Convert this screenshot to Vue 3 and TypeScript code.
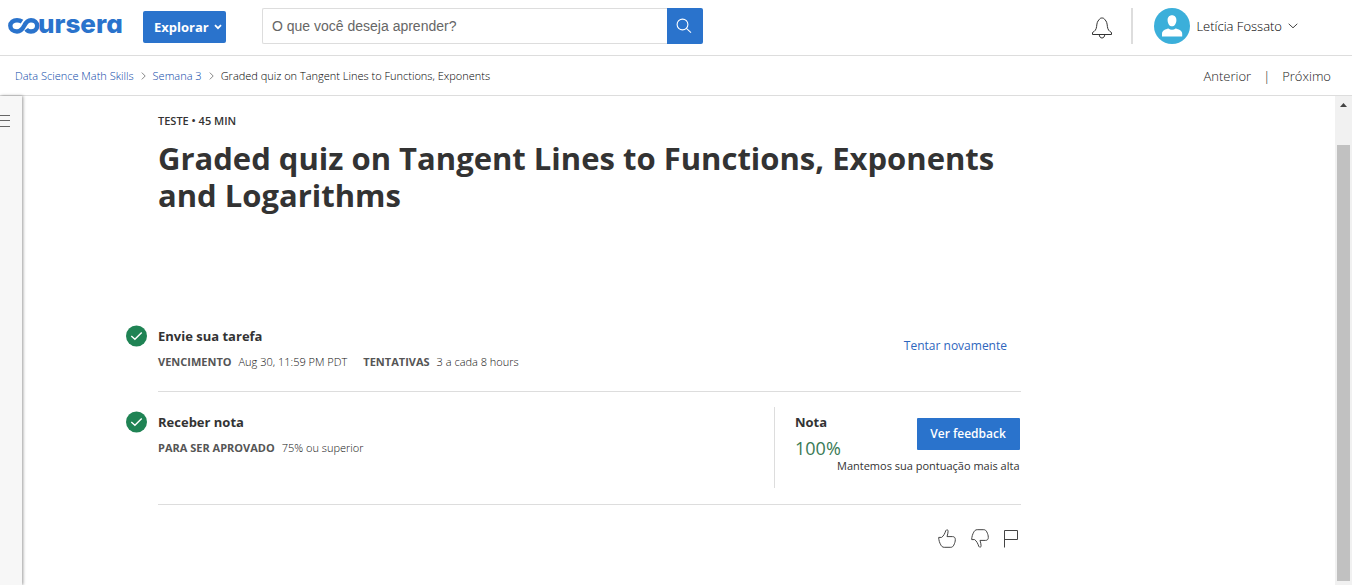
<script setup lang="ts">
import { ref } from 'vue'

interface Detail {
  label: string
  value: string
}

const query = ref('')
const courseTitle = 'Graded quiz on Tangent Lines to Functions, Exponents and Logarithms'
const submitDetails: Detail[] = [
  { label: 'VENCIMENTO', value: 'Aug 30, 11:59 PM PDT' },
  { label: 'TENTATIVAS', value: '3 a cada 8 hours' },
]
const gradeDetails: Detail[] = [{ label: 'PARA SER APROVADO', value: '75% ou superior' }]
</script>

<template>
  <div class="page">
    <header class="topbar">
      <a class="logo" href="#" aria-label="coursera">
        <svg width="116" height="36" viewBox="0 0 116 36">
          <path
            d="M14 13.6C12.6 12.6 10.8 12.2 9 12.2C5.2 12.2 2.3 14.6 2.3 17.8C2.3 21.1 5.2 23.5 9 23.5C12.8 23.5 14.6 21 16.2 17.8C17.8 14.4 19.4 12.2 23 12.2C26.6 12.2 29.2 14.6 29.2 17.8C29.2 21.1 26.6 23.5 23 23.5C20.8 23.5 19.2 22.6 18.2 21.2"
            fill="none"
            stroke="#2a73cc"
            stroke-width="4.4"
          />
          <text class="logo-text" x="30" y="25">ursera</text>
        </svg>
      </a>
      <button class="explore" type="button">
        Explorar
        <svg width="8" height="6" viewBox="0 0 8 6">
          <path d="M1 1.2L4 4.2L7 1.2" fill="none" stroke="#fff" stroke-width="1.8" />
        </svg>
      </button>
      <form class="search" role="search" @submit.prevent>
        <input v-model="query" type="text" aria-label="Pesquisar" placeholder="O que você deseja aprender?" />
        <button type="submit" aria-label="Enviar pesquisa">
          <svg width="18" height="16" viewBox="0 0 18 16" fill="none" stroke="#fff" stroke-width="1.1">
            <circle cx="6.5" cy="6.5" r="5.4" />
            <path d="M10.4 10.4L15 14.6" />
          </svg>
        </button>
      </form>
      <div class="account">
        <button class="bell" type="button" aria-label="Notificações">
          <svg width="22" height="22" viewBox="0 0 22 22" fill="none" stroke="#333" stroke-width="1">
            <path d="M1.5 17.5V15.5C4 14.2 5.2 12.6 5.6 9.5C6 5.8 6.4 4.4 8 2.8C9 1.2 9.8 1 11 1C12.2 1 13 1.2 14 2.8C15.6 4.4 16 5.8 16.4 9.5C16.8 12.6 18 14.2 20.5 15.5V17.5Z" />
            <path d="M8.3 17.5C8.3 19.6 9.4 21 11 21C12.6 21 13.7 19.6 13.7 17.5" />
          </svg>
        </button>
        <span class="separator"></span>
        <button class="user" type="button">
          <svg width="36" height="36" viewBox="0 0 36 36">
            <circle cx="18" cy="18" r="18" fill="#3bafda" />
            <path d="M18 7.2C20.8 7.2 22.6 9.3 22.4 12.4C22.2 15.8 20.4 18.3 18 18.3C15.6 18.3 13.8 15.8 13.6 12.4C13.4 9.3 15.2 7.2 18 7.2Z" fill="#fff" />
            <path d="M8 28.5V25.8C8 22.4 11.4 21.2 14.4 20.5C16.4 22.1 19.6 22.1 21.6 20.5C24.6 21.2 28.2 22.4 28.2 25.8V28.5Z" fill="#fff" />
          </svg>
          <span>Letícia Fossato</span>
          <svg width="10" height="6" viewBox="0 0 10 6">
            <path d="M.7 .8L5 4.8L9.3 .8" fill="none" stroke="#444" stroke-width="1" />
          </svg>
        </button>
      </div>
    </header>

    <div class="subbar">
      <nav class="crumbs" aria-label="Trilha">
        <a href="#">Data Science Math Skills</a>
        <svg width="5" height="8" viewBox="0 0 5 8"><path d="M.8 .6L4.2 4L.8 7.4" fill="none" stroke="#888" /></svg>
        <a href="#">Semana 3</a>
        <svg width="5" height="8" viewBox="0 0 5 8"><path d="M.8 .6L4.2 4L.8 7.4" fill="none" stroke="#888" /></svg>
        <span class="current">{{ courseTitle }}</span>
      </nav>
      <nav class="pager" aria-label="Itens">
        <a href="#">Anterior</a>
        <span>|</span>
        <a href="#">Próximo</a>
      </nav>
    </div>

    <div class="body">
      <aside class="rail">
        <button type="button" aria-label="Menu">
          <svg width="10" height="14" viewBox="0 0 10 14"><path d="M0 1.5H10M0 6.5H10M0 12.5H10" stroke="#666" /></svg>
        </button>
      </aside>

      <main class="content">
        <p class="kind">TESTE • 45 MIN</p>
        <h1>{{ courseTitle }}</h1>

        <section class="step submit">
          <svg class="check" width="22" height="22" viewBox="0 0 22 22">
            <circle cx="10.5" cy="11" r="10.5" fill="#1f8354" />
            <path d="M5.3 11L8.9 14.3L15.7 7.4" fill="none" stroke="#fff" stroke-width="1.4" />
          </svg>
          <div class="step-body">
            <div class="info">
              <h2>Envie sua tarefa</h2>
              <dl>
                <div v-for="item in submitDetails" :key="item.label">
                  <dt>{{ item.label }}</dt>
                  <dd>{{ item.value }}</dd>
                </div>
              </dl>
            </div>
            <a class="retry" href="#">Tentar novamente</a>
          </div>
        </section>

        <section class="step">
          <svg class="check" width="22" height="22" viewBox="0 0 22 22">
            <circle cx="10.5" cy="11" r="10.5" fill="#1f8354" />
            <path d="M5.3 11L8.9 14.3L15.7 7.4" fill="none" stroke="#fff" stroke-width="1.4" />
          </svg>
          <div class="step-body">
            <div class="info">
              <h2>Receber nota</h2>
              <dl>
                <div v-for="item in gradeDetails" :key="item.label">
                  <dt>{{ item.label }}</dt>
                  <dd>{{ item.value }}</dd>
                </div>
              </dl>
            </div>
            <div class="grade">
              <div class="score">
                <h2>Nota</h2>
                <p>100%</p>
              </div>
              <div class="feedback">
                <button type="button">Ver feedback</button>
                <p>Mantemos sua pontuação mais alta</p>
              </div>
            </div>
          </div>
        </section>

        <div class="reactions">
          <button type="button" aria-label="Gostei">
            <svg width="18" height="19" viewBox="0 0 18 19" fill="none" stroke="#444">
              <path d="M.7 8.4H3.6C5.6 7 6.8 4.6 7.8 1.6C8.4 .4 10.3 .6 10.1 2.2C10 4 9.6 5.6 9 7.6H14.5C16.5 7.6 17.3 8.8 17.3 10.6C17.3 12.6 16.7 14.2 15.8 16.1C15 17.6 14.2 18.3 12.8 18.3H6.2C4.4 18.3 3.6 17.3 2.8 15.9C1.6 13.8 .7 11.2 .7 8.4Z" />
            </svg>
          </button>
          <button type="button" aria-label="Não gostei">
            <svg width="18" height="19" viewBox="0 0 18 19" fill="none" stroke="#444">
              <path d="M.7 10.6H3.6C5.6 12 6.8 14.4 7.8 17.4C8.4 18.6 10.3 18.4 10.1 16.8C10 15 9.6 13.4 9 11.4H14.5C16.5 11.4 17.3 10.2 17.3 8.4C17.3 6.4 16.7 4.8 15.8 2.9C15 1.4 14.2 .7 12.8 .7H6.2C4.4 .7 3.6 1.7 2.8 3.1C1.6 5.2 .7 7.8 .7 10.6Z" />
            </svg>
          </button>
          <button type="button" aria-label="Sinalizar">
            <svg width="14" height="19" viewBox="0 0 14 19" fill="none" stroke="#444">
              <path d="M.5 18.5V1.5H13.5V10.5H.5" />
            </svg>
          </button>
        </div>
      </main>

      <div class="scroll-track" aria-hidden="true">
        <svg width="7" height="4" viewBox="0 0 7 4"><path d="M0 4L3.5 0L7 4Z" fill="#444" /></svg>
        <div class="scroll-thumb"></div>
      </div>
    </div>
  </div>
</template>

<style>
body {
  margin: 0;
  background: #fff;
}
</style>

<style scoped>
* {
  box-sizing: border-box;
}

.page {
  display: flex;
  flex-direction: column;
  min-height: 100vh;
  color: #333;
  font: 11px/16px 'Open Sans', 'Noto Sans', sans-serif;
}

svg {
  display: block;
  flex: none;
  overflow: visible;
}

a {
  color: #2e66bd;
  text-decoration: none;
}

button {
  border: 0;
  padding: 0;
  background: none;
  color: inherit;
  font: inherit;
  cursor: pointer;
}

h1,
h2,
p,
dl,
dd {
  margin: 0;
}

.topbar {
  display: flex;
  align-items: flex-start;
  height: 56px;
  padding: 8px 54px 0 8px;
  border-bottom: 1px solid #ddd;
}

.logo-text {
  fill: #2a73cc;
  font: 800 26px Inter, sans-serif;
  font-feature-settings: 'cv11';
}

.explore {
  display: flex;
  align-items: center;
  gap: 5px;
  width: 83px;
  height: 32px;
  margin: 3px 0 0 19px;
  padding-left: 11px;
  border-radius: 2px;
  background: #2a73cc;
  color: #fff;
  font-size: 13px;
  font-weight: 700;
}

.search {
  display: flex;
  width: 441px;
  height: 36px;
  margin-left: 36px;
}

.search input {
  flex: 1;
  min-width: 0;
  padding: 0 9px;
  border: 1px solid #ddd;
  border-right: 0;
  border-radius: 2px 0 0 2px;
  color: #333;
  font: 14px 'Liberation Sans', Arial, sans-serif;
}

.search input::placeholder {
  color: #666;
}

.search button {
  display: grid;
  place-items: center;
  width: 36px;
  border-radius: 0 2px 2px 0;
  background: #2a73cc;
}

.account {
  display: flex;
  align-items: center;
  margin-left: auto;
}

.bell {
  padding-top: 4px;
}

.separator {
  width: 2px;
  height: 36px;
  margin: 0 21px 0 18px;
  background: #ddd;
}

.user {
  display: flex;
  align-items: center;
  gap: 6px;
  font-size: 13px;
  font-weight: 300;
  color: #000;
}

.subbar {
  display: flex;
  align-items: center;
  justify-content: space-between;
  height: 40px;
  padding: 0 21px 0 15px;
  border-bottom: 1px solid #ddd;
}

.crumbs {
  display: flex;
  align-items: center;
  gap: 7px;
  font-weight: 300;
  color: #000;
}

.crumbs a {
  color: #0b47a8;
}

.current {
  width: 271px;
  overflow: hidden;
  white-space: nowrap;
}

.pager {
  display: flex;
  gap: 12px;
  font-size: 13px;
  font-weight: 300;
}

.pager,
.pager a {
  color: #222;
}

.body {
  display: flex;
  flex: 1;
}

.rail {
  width: 22px;
  padding-top: 18px;
  background: #f7f7f7;
  box-shadow: 1px 0 3px rgba(0, 0, 0, 0.4);
}

.content {
  flex: 1;
  padding: 17px 16px 0 104px;
}

.content > * {
  max-width: 895px;
}

.kind,
h1 {
  padding-left: 32px;
}

.kind {
  font-weight: 600;
}

h1 {
  margin-top: 11px;
  font-size: 31px;
  font-weight: 700;
  line-height: 37px;
}

.step {
  display: flex;
  gap: 10px;
}

.step.submit {
  margin-top: 110px;
}

.step + .step {
  margin-top: 15px;
}

.step-body {
  display: flex;
  flex: 1;
  justify-content: space-between;
  border-bottom: 1px solid #ddd;
}

.submit .step-body {
  height: 68px;
}

.check {
  margin-top: 1px;
}

.step + .step .check {
  margin-top: 4px;
}

.info {
  padding-top: 4px;
}

.step + .step .info,
.score {
  padding-top: 7px;
}

h2 {
  font-size: 13px;
  font-weight: 700;
  line-height: 16px;
}

dl {
  display: flex;
  gap: 16px;
  margin-top: 10px;
}

dl div {
  display: flex;
  gap: 7px;
}

dt {
  color: #555;
  font-weight: 700;
}

dd {
  color: #111;
  font-weight: 300;
}

.retry {
  margin: 14px 14px 0 0;
  font-size: 12px;
}

.grade {
  display: flex;
  width: 247px;
  height: 81px;
  margin-bottom: 16px;
  padding-left: 20px;
  border-left: 1px solid #ddd;
}

.score {
  width: 42px;
}

.score p {
  margin-top: 6px;
  color: #3a7a56;
  font-size: 18px;
  line-height: 24px;
}

.feedback {
  display: flex;
  flex: 1;
  flex-direction: column;
  align-items: flex-end;
  padding: 11px 2px 0 0;
  white-space: nowrap;
}

.feedback button {
  width: 103px;
  height: 32px;
  border-radius: 1px;
  background: #2a73cc;
  color: #fff;
  font-size: 12px;
  font-weight: 600;
}

.feedback p {
  margin-top: 8px;
}

.reactions {
  display: flex;
  justify-content: flex-end;
  gap: 15px;
  padding: 24px 3px 0 0;
}

.scroll-track {
  display: flex;
  flex-direction: column;
  align-items: center;
  gap: 38px;
  width: 17px;
  padding: 7px 0 4px;
  background: #f1f1f1;
}

.scroll-thumb {
  flex: 1;
  width: 13px;
  background: #c1c1c1;
}
</style>
